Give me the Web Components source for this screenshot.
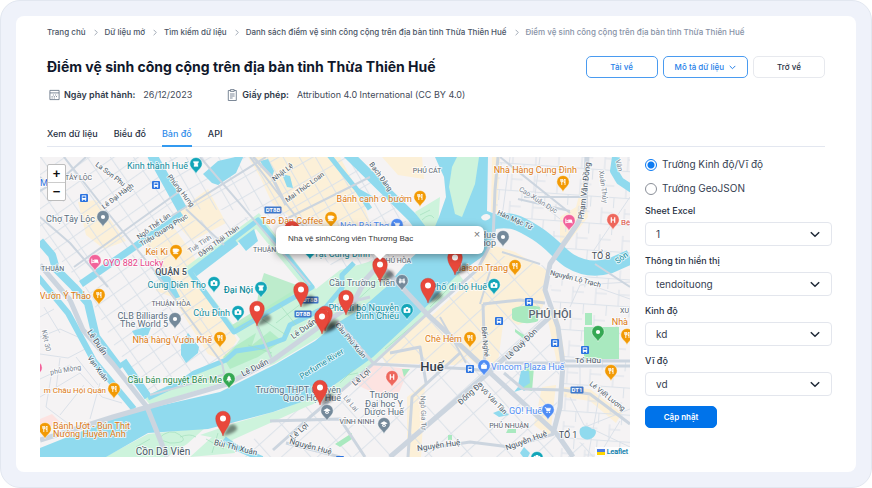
<!DOCTYPE html>
<html lang="vi">
<head>
<meta charset="utf-8">
<meta name="viewport" content="width=device-width, initial-scale=1">
<title>Điểm vệ sinh công cộng trên địa bàn tỉnh Thừa Thiên Huế</title>
<style>
    body {
        margin: 0;
        background: #fff;
        color: #27303f;
        font-family: Inter, "Noto Sans", sans-serif;
        font-size: 9px;
    }
</style>
</head>
<body>

<portal-shell>
    <crumb-trail slot="top">
        <a href="#">Trang chủ</a>
        <a href="#">Dữ liệu mở</a>
        <a href="#">Tìm kiếm dữ liệu</a>
        <a href="#">Danh sách điểm vệ sinh công cộng trên địa bàn tỉnh Thừa Thiên Huế</a>
        <span>Điểm vệ sinh công cộng trên địa bàn tỉnh Thừa Thiên Huế</span>
    </crumb-trail>
    <dataset-head slot="top">
        <span slot="title">Điểm vệ sinh công cộng trên địa bàn tỉnh Thừa Thiên Huế</span>
        <action-button slot="actions" kind="outline">Tải về</action-button>
        <action-button slot="actions" kind="outline" caret>Mô tả dữ liệu</action-button>
        <action-button slot="actions">Trở về</action-button>
        <meta-item slot="meta" icon="calendar" label="Ngày phát hành:">26/12/2023</meta-item>
        <meta-item slot="meta" icon="clipboard" label="Giấy phép:">Attribution 4.0 International (CC BY 4.0)</meta-item>
    </dataset-head>
    <tab-bar slot="top">
        <a href="#">Xem dữ liệu</a>
        <a href="#">Biểu đồ</a>
        <a href="#" aria-current="page">Bản đồ</a>
        <a href="#">API</a>
    </tab-bar>
    <geo-map>Nhà vệ sinhCông viên Thương Bạc</geo-map>
    <map-settings></map-settings>
</portal-shell>

<template id="portal-shell">
    <style>
        :host {
            display: block;
            box-sizing: border-box;
            min-height: 100vh;
            padding: 15px;
            border: 1px solid #e2e7f0;
            border-radius: 20px;
            background: #eff2fa;
        }
        .card {
            box-sizing: border-box;
            padding: 8px 24px 15px;
            border-radius: 8px;
            background: #fff;
        }
        .top {
            padding: 0 7px;
        }
        .body {
            display: grid;
            grid-template-columns: minmax(0, 1fr) 187px;
            gap: 15px;
            margin-top: 10px;
        }
    </style>
    <div class="card">
        <header class="top"><slot name="top"></slot></header>
        <main class="body"><slot></slot></main>
    </div>
</template>

<template id="crumb-trail">
    <style>
        :host {
            display: block;
            font-size: 8px;
            font-weight: 500;
            line-height: 16px;
        }
        nav {
            display: flex;
            white-space: nowrap;
        }
        ::slotted(*) {
            color: #4a5465;
            text-decoration: none;
        }
        ::slotted(:not(:last-child)) {
            padding-right: 19px;
            background: var(--chevron) no-repeat right 7px center;
        }
        ::slotted(span) {
            color: #8792a6;
        }
    </style>
    <nav aria-label="Breadcrumb"><slot></slot></nav>
</template>

<template id="dataset-head">
    <style>
        :host {
            display: block;
        }
        .row {
            display: flex;
            justify-content: space-between;
            align-items: center;
            margin-top: 16px;
        }
        h1 {
            margin: 0;
            color: #10182b;
            font-size: 14px;
            font-weight: 700;
            line-height: 22px;
        }
        .actions {
            display: flex;
            gap: 5px;
        }
        .meta {
            display: flex;
            gap: 35px;
            margin-top: 9px;
            padding-left: 2px;
        }
    </style>
    <div class="row">
        <h1><slot name="title"></slot></h1>
        <div class="actions"><slot name="actions"></slot></div>
    </div>
    <div class="meta"><slot name="meta"></slot></div>
</template>

<template id="action-button">
    <style>
        :host {
            display: inline-block;
        }
        button {
            display: flex;
            align-items: center;
            justify-content: center;
            gap: 5px;
            box-sizing: border-box;
            min-width: 72px;
            height: 22px;
            padding: 0 11px;
            border: 1px solid #e7e9ee;
            border-radius: 5px;
            background: #fff;
            color: #27303f;
            font: 500 8px/12px Inter, "Noto Sans", sans-serif;
            white-space: nowrap;
        }
        :host([kind=outline]) button {
            border-color: #4a9bf0;
            color: #2680e8;
        }
        :host([kind=primary]) button {
            border-color: #0073ea;
            background: #0073ea;
            color: #fff;
            font-weight: 600;
        }
        svg {
            display: none;
        }
        :host([caret]) svg {
            display: block;
        }
    </style>
    <button type="button">
        <slot></slot>
        <svg width="7" height="5" viewBox="0 0 7 5" fill="none" stroke="currentColor"><path d="M.7.9 3.5 3.7 6.3.9"/></svg>
    </button>
</template>

<template id="meta-item">
    <style>
        :host {
            display: flex;
            align-items: center;
            color: #3f4958;
            font-size: 9px;
            line-height: 16px;
        }
        b {
            margin: 0 8px 0 4px;
            font-weight: 600;
            color: #303a4a;
        }
        svg {
            fill: none;
            stroke: #5c6b7e;
            stroke-width: .8;
        }
        svg.calendar, svg.clipboard {
            display: none;
        }
        :host([icon=calendar]) svg.calendar,
        :host([icon=clipboard]) svg.clipboard {
            display: block;
        }
    </style>
    <svg class="calendar" width="11" height="12" viewBox="0 0 11 12">
        <path d="M.9 1.4h9.2v9.2H.9zM.9 3.9h9.2"/>
        <path stroke-dasharray="1 1.2" d="M3.9 6h4.6M2.6 7.6h5.6M2.6 9h3.6"/>
    </svg>
    <svg class="clipboard" width="11" height="12" viewBox="0 0 11 12">
        <path d="M3.4 1.5H1.3v10h8v-10H7.2M3.4.6h3.8v1.8H3.4zM3 5h4.6M3 7h4.6M3 9h2.6"/>
    </svg>
    <b></b>
    <span><slot></slot></span>
</template>

<template id="tab-bar">
    <style>
        :host {
            display: block;
            margin-top: 20px;
            border-bottom: 1px solid #e3e7f0;
            font-size: 9px;
            font-weight: 500;
            line-height: 16px;
        }
        nav {
            display: flex;
            gap: 16px;
            margin-bottom: -1px;
        }
        ::slotted(a) {
            padding: 3px 0;
            border-bottom: 2px solid transparent;
            color: #27303f;
            text-decoration: none;
        }
        ::slotted(a[aria-current]) {
            border-color: #339af0;
            color: #2f8cea;
        }
    </style>
    <nav><slot></slot></nav>
</template>

<template id="field-select">
    <style>
        :host {
            display: block;
        }
        label {
            display: block;
            margin-bottom: 5px;
            font-size: 9px;
            font-weight: 500;
            line-height: 12px;
        }
        .box {
            display: grid;
            align-items: center;
        }
        select, svg {
            grid-area: 1 / 1;
        }
        select {
            appearance: none;
            width: 100%;
            height: 24px;
            margin: 0;
            padding: 0 10px;
            border: 1px solid #e3e6ed;
            border-radius: 4px;
            background: #fff;
            color: #364152;
            font: 10px/16px Inter, "Noto Sans", sans-serif;
        }
        svg {
            justify-self: end;
            margin-right: 12px;
            pointer-events: none;
        }
    </style>
    <label for="field"></label>
    <div class="box">
        <select id="field"></select>
        <svg width="10" height="7" viewBox="0 0 10 7" fill="none" stroke="#1f2937" stroke-width="1.5"><path d="M.8 1.2 5 5.2 9.2 1.2"/></svg>
    </div>
</template>

<template id="map-settings">
    <style>
        :host {
            display: block;
        }
        form {
            display: flex;
            flex-direction: column;
            gap: 9px;
        }
        .choice {
            display: flex;
            align-items: center;
            gap: 5px;
            color: #364152;
            font-size: 10px;
            line-height: 15px;
        }
        input {
            appearance: none;
            box-sizing: border-box;
            width: 12px;
            height: 12px;
            margin: 0;
            border: 1px solid #8a8f98;
            border-radius: 50%;
        }
        input:checked {
            border-color: #0d7bf2;
            background: radial-gradient(circle, #0d7bf2 3px, #fff 4px);
        }
        action-button {
            align-self: flex-start;
            margin-top: 1px;
        }
    </style>
    <form>
        <label class="choice"><input type="radio" name="kind" checked>Trường Kinh độ/Vĩ độ</label>
        <label class="choice"><input type="radio" name="kind">Trường GeoJSON</label>
        <field-select label="Sheet Excel" value="1"></field-select>
        <field-select label="Thông tin hiển thị" value="tendoituong"></field-select>
        <field-select label="Kinh độ" value="kd"></field-select>
        <field-select label="Vĩ độ" value="vd"></field-select>
        <action-button kind="primary">Cập nhật</action-button>
    </form>
</template>

<template id="geo-map">
    <style>
        :host {
            display: block;
            position: relative;
            height: 300px;
            overflow: hidden;
            background: #f5f3f4;
        }
        .canvas {
            display: block;
            width: 100%;
            height: 100%;
            font-family: Roboto, "Noto Sans", sans-serif;
        }
        .shop { fill: #fcf0d8; }
        .water { fill: #90daee; }
        .water-line { fill: none; stroke: #90daee; stroke-linejoin: round; }
        .grass { fill: #cdf3dc; }
        .park { fill: #a9e9bf; }
        .clinic { fill: #fde3e1; }
        .lane { fill: none; stroke: #dbe1e9; stroke-width: 1; }
        .road { fill: none; stroke: #ccd5df; stroke-linejoin: round; }
        .path { fill: none; stroke: #a3dfbd; stroke-width: .7; }
        text {
            paint-order: stroke;
            stroke: #fff;
            stroke-width: 2px;
            stroke-linejoin: round;
            stroke-opacity: .7;
        }
        .zoom {
            position: absolute;
            top: 7px;
            left: 7px;
            display: grid;
            border: 1px solid #bdbdbd;
            border-radius: 2px;
            background: #fff;
        }
        .zoom button {
            width: 17px;
            height: 17px;
            padding: 0;
            border: 0;
            background: none;
            color: #111;
            font: bold 13px/17px "Liberation Sans", Arial, sans-serif;
        }
        .zoom button + button {
            height: 18px;
            border-top: 1px solid #ccc;
        }
        /* anchored on the marker of the selected place */
        .popup {
            position: absolute;
            top: 69px;
            left: 236px;
            display: flex;
            box-sizing: border-box;
            width: 208px;
            height: 28px;
            padding: 0 3px 0 12px;
            border-radius: 6px;
            background: #fff;
            box-shadow: 0 2px 8px rgba(0, 0, 0, .4);
            color: #333;
            font: 8px/26px "Liberation Sans", Arial, sans-serif;
        }
        .popup p {
            flex: 1;
            margin: 0;
        }
        .popup::after {
            content: "";
            position: absolute;
            top: 100%;
            left: 50%;
            margin-left: -6px;
            border: 6px solid transparent;
            border-top-color: #fff;
            border-bottom: 0;
        }
        .popup button {
            align-self: flex-start;
            width: 8px;
            padding: 0;
            border: 0;
            background: none;
            color: #757575;
            font: 11px/16px "Liberation Sans", Arial, sans-serif;
        }
        .credit {
            position: absolute;
            right: 0;
            bottom: 0;
            display: flex;
            align-items: center;
            gap: 2px;
            padding: 0 2px;
            background: rgba(255, 255, 255, .8);
            color: #0078a8;
            font: 7px/10px Roboto, sans-serif;
            text-decoration: none;
            -webkit-text-stroke: .2px;
        }
    </style>
    <svg class="canvas" viewBox="0 0 590 300" preserveAspectRatio="xMinYMin slice" role="img" aria-label="Bản đồ Huế">
        <defs>
            <pattern id="grid-nw" width="19" height="14" patternUnits="userSpaceOnUse" patternTransform="rotate(-35)">
                <path class="lane" d="M0 .6H19M.6 0V14"/>
            </pattern>
            <pattern id="grid-c" width="14" height="17" patternUnits="userSpaceOnUse" patternTransform="rotate(-30)">
                <path class="lane" d="M0 .6H14M.6 0V17"/>
            </pattern>
            <pattern id="grid-s" width="30" height="24" patternUnits="userSpaceOnUse" patternTransform="rotate(-42)">
                <path class="lane" d="M0 .6H30M.6 0V24"/>
            </pattern>
            <pattern id="grid-e" width="23" height="27" patternUnits="userSpaceOnUse" patternTransform="rotate(4)">
                <path class="lane" d="M0 .6H23M.6 0V11M12 11V27M12 16H23"/>
            </pattern>
            <filter id="soft" x="-50%" y="-50%" width="200%" height="200%"><feGaussianBlur stdDeviation="1.4"/></filter>
        </defs>

        <!-- commercial blocks -->
        <path class="shop" d="M38 45 56 43 86 84 64 92 46 78zM108 74 128 62 152 96 197 183 184 204 168 197 132 140 116 134 122 112 106 88zM208 0H300L322 42 330 66 300 75 250 60 232 46 220 20zM130 60 168 32 186 66 152 84zM452 88 475 95 508 114 504 146 498 160 478 168 464 160 458 205 444 214 425 198 390 160 432 122zM342 0 358 18 384 22 382 0zM452 0h8l-3 55h-6zM340 196 386 158 428 202 416 208 345 206zM367 240l18-14-4 76h-14zM502 230l14-2-6 52-16-12zM524 230l26 2 32 24-6 10-26-22-26-4zM505 150l12 2 8 48-8 6zM520 60l16-10 8-30 4 40-28 36z"/>
        <path class="clinic" d="M313 226 333 208 369 212 358 238 338 238zM0 262l12-5 8 8-20 10z"/>

        <!-- side streets -->
        <path fill="url(#grid-nw)" d="M0 0H112L140 55 40 125 0 80z"/>
        <path fill="url(#grid-nw)" d="M45 130 142 64 212 60 145 112 198 185 186 204 110 240 75 190z"/>
        <path fill="url(#grid-c)" d="M127 0H312L375 75 340 110 296 112 222 54 146 52z"/>
        <path fill="url(#grid-s)" d="M447 95 510 110 503 160 520 205 515 278 590 300H190L240 262 333 208z"/>
        <path fill="url(#grid-e)" d="M460 0H590V100L555 107 525 95 490 66 455 55z"/>
        <path fill="url(#grid-e)" d="M508 112 540 120 590 112V300H515L523 210z"/>
        <path class="lane" d="M0 197 28 201 49 190M0 240 40 216 62 240 82 246M12 214 6 250 30 268M36 200 58 228M0 222 30 208M0 180 20 172 38 180M4 150 20 176M0 160 14 152M20 201 16 232M44 228 20 258M60 226 50 262"/>
        <path class="lane" d="M500 0 494 46M534 70 516 92M552 96 590 40M556 130 590 142M530 240 544 268 590 290M540 210v24M560 234 548 300M580 264 558 300M470 0 462 60M480 30 520 62M540 272 590 252M530 150 540 128 590 125"/>

        <!-- parks and river banks -->
        <path class="grass" d="M143 112 219 56 276 132 300 113 332 104 352 118 340 140 308 163 234 207 187 224 110 248 104 240 150 218 185 204 200 182zM375 55 400 40 398 70 388 78zM290 232 380 152 418 116 424 124 330 208 296 238 268 249 190 284 160 278 195 266 240 253zM65 300 108 277 165 271 147 287 127 300zM172 280 190 272 195 296 150 300z"/>
        <path fill="#f5f3f4" d="M155 118 216 72 262 128 195 170z"/>
        <path class="park" fill-opacity=".75" d="M219 132 224 116 262 130 240 148 222 162 196 174 192 168 216 153zM183 200 194 190 216 176 212 188 230 174 242 184 218 200 190 212z"/>

        <!-- water -->
        <path class="water" d="M0 291 75 261 97 254 180 235 236 207 275 184 294 168 322 151 345 131 368 104 388 86 399 60 406 40 404 20 395 0H448L447 54 458 58 454 84 446 97 418 117 378 158 333 200 290 231 267 243 233 255 168 272 108 276 66 300H0z"/>
        <path class="water-line" stroke-width="15" d="M448 66C470 60 480 66 496 76S520 98 530 104 552 114 570 109L590 100"/>
        <path class="water-line" stroke-width="10" d="M112-2 142 52M307-4 372 60 392 86"/>
        <path class="water-line" stroke-width="7" d="M142 57 41 127"/>
        <path class="water-line" stroke-width="8" d="M0 84 12 98 16 112 34 130 48 146 56 180 80 212M83 204 108 240"/>
        <path class="water-line" stroke-width="6" d="M-2 120 28 156 54 204 94 252M184 282 195 290 222 302"/>
        <path class="water-line" stroke-width="5" d="M150 115 218 63 272 130 194 175zM108 241 140 226 154 216 186 203 196 194 222 190 244 182 250 168 286 150 302 131 302 118 314 106M289-2 300 12 318 34 332 42M318 34 330 52"/>
        <path class="water-line" stroke-width="8" d="M154 116 196 84M576 0 574 14 580 24 592 32"/>
        <path class="water" d="M163 17 178 4 204-2 196 16 178 28 172 26zM198 84 214 72 218 84 206 94zM141 188 148 176 159 190 158 196 146 206 141 198zM118 114 130 120 140 140 134 142 114 116zM220 4 228 2 234 14 232 20 226 14zM242 17l8 2 3 12-6-1zM92 174 112 168 108 178 96 181zM481 214 490 212 492 228 484 234 478 228zM453 256l10-4 6 6-10 2zM478 230l6 2-10 3zM540 272c4-5 10-2 12 0 6-1 5 8-2 10-7 2-12-4-10-10zM484 290l6 6-4 8-6-8z"/>
        <path class="grass" d="M417 0H439L435 27 422 60 415 57 409 30 412 10z"/>
        <path fill="#f5f3f4" d="M441 60C445 54 452 58 450 61S442 65 441 60z"/>
        <path class="park" d="M472 152c6-4 22-4 28-2l-2 14c-8 4-24 2-26-3zM475 172l12 8-3 2-9-7zM545 156h7v12h-7zM544 170h35v32h-35zM484 206l10 4-2 24-8-2zM468 272h8v4h-10zM295 287 312 276 312 282 300 290zM362 212h8l-6 8zM408 278h4v5h-4z"/>
        <path class="water" d="M483 213 489 214 490 226 484 230 480 226z"/>
        <path class="path" d="M200 172 232 152M218 168 232 200M240 148 256 168M222 162 246 178M236 166 262 146M208 188 232 196M118 282q12-12 22-4t-10 8zM140 280q10-4 16 0M300 226 314 212M308 218 318 216M380 58l10-5M382 63q8-8 12-2M345 192 378 164M390 150 414 126M312 148 340 122M96 290l14-8M166 282l18 10M178 276l-6 20"/>

        <!-- main streets -->
        <path class="road" stroke-width="2" d="M0 34 24 20 46 0M0 60 30 86 68 130M24 0 68 56 116 116 182 206M34 110 98 64 140 34M146 52 184 88M182 206 186 226M160 0 270 128M210 0 254 57 284 96M130 60 226 0M246 62 330 20M217 169 231 201M110 238 190 216M0 20 24 44M460 0 530 56M478 42 530 54M462 95 500 107M400 160 426 206M484 40 544 40M555 107 590 130M440 147 452 108"/>
        <path class="road" stroke-width="3" d="M334 207 430 212 448 214M443 147 480 143 505 146M443 147 445 212M483 232 523 233 550 237 590 267M483 232 464 216M233 293 270 260 333 207 387 157 437 113 453 83 455 33 458 0M386 226 380 190 350 196M368 300 372 240 420 196M290 150 330 140M213 0 232 20 246 48M246 286 300 300M377 293 430 285 470 290 514 277M230 264 300 262 325 300"/>
        <path class="road" stroke-width="3" d="M297 164 334 207"/>
        <path class="road" stroke-width="5" d="M0 108 30 143 43 173 73 207 107 250 127 300M0 283 73 260 143 240 187 227 233 203 283 167 312 148 326 122 340 107M340 107 387 157 433 200 517 277 533 300M350 300 447 217 510 160M547-2 545 50 538 66 510 107 505 133 518 170 523 207 520 250 513 277"/>
        <path class="road" stroke-width="3" d="M523 204H590M523 209H590M520 206H465"/>

        <g id="badges"></g>
        <g id="labels"></g>
        <g id="places"></g>
        <g id="markers"></g>
    </svg>
    <div class="zoom">
        <button type="button" aria-label="Phóng to">+</button>
        <button type="button" aria-label="Thu nhỏ">−</button>
    </div>
    <div class="popup">
        <p><slot></slot></p>
        <button type="button" aria-label="Đóng">×</button>
    </div>
    <a class="credit" href="#"><svg width="8" height="6" viewBox="0 0 8 6"><path fill="#4c7be1" d="M0 0h8v3H0z"/><path fill="#ffd500" d="M0 3h8v3H0z"/></svg>Leaflet</a>
</template>

<script>
    (function (window, document) {

        var CHEVRON = 'url("data:image/svg+xml,%3Csvg xmlns=\'http://www.w3.org/2000/svg\' width=\'4\' height=\'7\' fill=\'none\' stroke=\'%238b95a5\' stroke-width=\'.8\'%3E%3Cpath d=\'M.6.8 3.3 3.5.6 6.2\'/%3E%3C/svg%3E")';

        var ORANGE = '#f29a05', TEAL = '#12a5b8', GREY = '#74899a', PINK = '#f2629a',
            BLUE = '#4f8df5', RED = '#ee675c', GREEN = '#34a853';

        // Glyphs are drawn around the centre of the pin head
        var GLYPHS = {
            food: '<path d="M-2.2-3v2q0 1.2 1 1.3V3M-.3-3v2q0 1.2-.9 1.3M-1.2-3v3M2 3V-3Q.6-2 1 .4H2"/>',
            cup: '<path fill="#fff" d="M-2.8-2h4.4v2.2q0 1.2-1.2 1.2h-2q-1.2 0-1.2-1.2z"/><path d="M1.6-1.5h1.2v1.6H1.6M-2.8 2.6h5"/>',
            dot: '<circle r="2.1" fill="#fff" stroke="none"/>',
            bed: '<path d="M-3.2-2.4v4.8M-3.2 1.4h6.4v1"/><path fill="#fff" stroke="none" d="M-.8-1.5h2.6q1.4 0 1.4 1.4V1H-.8z"/><circle cx="-1.8" cy="-.2" r=".8" fill="#fff" stroke="none"/>',
            camera: '<path fill="#fff" d="M-3-1.6h1.4l.6-.9h2l.6.9H3v4h-6z"/><circle r="1.1" cy=".4" fill="#12a5b8" stroke="none"/>',
            castle: '<path fill="#fff" d="M-2.4-2.8h1v.8h.8v-.8h1.2v.8h.8v-.8h1v1.8l-.8.6.5 2.8h-4.2l.5-2.8-.8-.6z" stroke-width=".3"/>',
            tree: '<path fill="#fff" stroke="none" d="M0-3.6 2-.8H1.3L2.8 1.6H.5V3.2h-1V1.6h-2.3L-1.3-.8H-2z"/>',
            school: '<path fill="#fff" stroke="none" d="M0-2.8 3.6-.8 0 1.2-3.6-.8zM-2 .8 0 1.9 2 .8v1.3L0 3.1-2 2.1z"/>',
            cart: '<path fill="#fff" d="M-3.2-2.4h1l1 3.4h3l.9-2.8h-4.4z" stroke-width=".5"/><circle cx="-1" cy="2.4" r=".7" fill="#fff" stroke="none"/><circle cx="1.5" cy="2.4" r=".7" fill="#fff" stroke="none"/>',
            bag: '<path fill="#fff" d="M-2.4-1h4.8v3.4h-4.8z"/><path d="M-1.2-1q0-2 1.2-2t1.2 2"/>',
            hospital: '<path d="M-1.7-2.7v5.4M1.7-2.7v5.4M-1.7 0h3.4" stroke-width="1.2"/>',
            bridge: '<path d="M-2-2.6v5.2M2-2.6v5.2M-3.2.8h6.4M-2-1h4" stroke-width="1.2"/>'
        };

        // tip x, tip y, colour, glyph
        var PLACES = [
            [156, 17, TEAL, 'castle'], [63, 70, GREY, 'dot'], [55, 114, PINK, 'bed'],
            [136, 104, ORANGE, 'cup'], [59, 148, ORANGE, 'food'], [174, 136, TEAL, 'camera'],
            [221, 141, TEAL, 'castle'], [198, 165, TEAL, 'camera'], [135, 172, GREY, 'dot'],
            [180, 191, ORANGE, 'food'], [189, 232, GREEN, 'tree'], [74, 242, ORANGE, 'food'],
            [5, 282, ORANGE, 'food'], [-4, 221, PINK, 'bed'], [287, 264, GREY, 'school'],
            [291, 71, ORANGE, 'cup'], [380, 50, ORANGE, 'food'], [357, 78, BLUE, 'cart'],
            [463, 90, GREY, 'dot'], [523, 35, ORANGE, 'food'], [529, 74, PINK, 'bed'],
            [573, 73, RED, 'hospital'], [475, 119, ORANGE, 'food'], [362, 134, GREY, 'bridge'],
            [454, 138, TEAL, 'camera'], [367, 163, TEAL, 'camera'], [430, 191, ORANGE, 'food'],
            [444, 219, BLUE, 'bag'], [352, 230, RED, 'hospital'], [344, 277, GREY, 'school'],
            [508, 263, BLUE, 'cart'], [558, 185, GREEN, 'dot'], [587, 188, ORANGE, 'food'],
            [571, 224, ORANGE, 'food'], [497, 311, TEAL, 'camera'], [270, 103, TEAL, 'dot']
        ];

        var MARKERS = [
            [252, 89], [340, 125], [415, 118], [388, 146], [261, 150], [306, 158],
            [217, 169], [285, 174], [282, 177], [280, 248], [183, 279]
        ];

        // bus stops and road shields
        var STOPS = [[44, 41], [116, 28], [489, 145], [459, 164], [515, 186], [430, 212], [545, 193], [300, 303]];
        var SHIELDS = [[233, 53, 'DT8B'], [270, 143, 'DT8B'], [263, 157, 'DT8B'], [537, 233, 'DT1']];

        // x, y, text, size, colour, anchor, angle, weight
        var STREET = '#4a5765', AREA = '#5a6470', O = '#dd7a14', T = '#128b9c', G = '#5b6f80';
        var LABELS = [
            [148, 12, 'Kinh thành Huế', 9, T, 'end'],
            [55, 65, 'Chợ Tây Lộc', 9, G, 'end'],
            [63, 109, 'OYO 882 Lucky', 9, '#e8458b', 'start'],
            [128, 98, 'Kei Ki', 9, O, 'end'],
            [51, 142, 'Vườn Ý Thảo', 9, O, 'end'],
            [166, 131, 'Cung Diên Thọ', 9, T, 'end'],
            [213, 136, 'Đại Nội', 9, T, 'end', 0, 500],
            [190, 159, 'Cửu Đỉnh', 9, T, 'end'],
            [128, 162, 'CLB Billiards', 9, G, 'end'],
            [128, 170, 'The World 5', 9, G, 'end'],
            [172, 186, 'Nhà hàng Vườn Khế', 9, O, 'end'],
            [182, 226, 'Cầu bán nguyệt Bến Me', 9, '#2c8a4b', 'end'],
            [66, 236, 'm Châu Hội Quán', 8, O, 'end'],
            [13, 272, 'Bánh Ướt - Bún Thịt', 9, O, 'start'],
            [13, 280, 'Nướng Huyền Anh', 9, O, 'start'],
            [283, 67, 'Tao Đàn Coffee', 9, O, 'end'],
            [372, 45, 'Bánh canh o bướm', 9, O, 'end'],
            [349, 72, 'Nón Bài Thơ', 9, BLUE, 'end'],
            [330, 100, 'Tạt Cung Đình', 9, T, 'end'],
            [456, 81, 'Hue', 9, G, 'end'],
            [456, 89, 'Shop', 9, G, 'end'],
            [537, 16, 'Nhà Hàng Cung Đình', 9, O, 'end'],
            [581, 68, 'Bệ', 8, '#dc4c43', 'start'],
            [468, 114, 'Maison Trang', 9, O, 'end'],
            [355, 129, 'Cầu Trường Tiền', 9, G, 'end'],
            [447, 133, 'Phố đi bộ Huế', 9, T, 'end'],
            [359, 154, 'Phố đi bộ Nguyễn', 9, T, 'end'],
            [359, 162, 'Đình Chiểu', 9, T, 'end'],
            [422, 185, 'Chè Hẻm', 9, O, 'end'],
            [451, 213, 'Vincom Plaza Huế', 9, BLUE, 'start'],
            [502, 257, 'GO! Huế', 9, BLUE, 'end'],
            [588, 168, 'Nhà', 9, O, 'end'],
            [301, 236, 'Trường THPT Chuyên', 9, G, 'end'],
            [301, 244, 'Quốc Học Huế', 9, G, 'end'],
            [344, 241, 'Trường', 9, G, 'middle'],
            [344, 250, 'Đại học Y', 9, G, 'middle'],
            [344, 258, 'Dược Huế', 9, G, 'middle'],
            [0, 29, 'M', 9, '#2b73e0', 'start'],
            [392, 214, 'Huế', 13, '#333b44', 'middle', 0, 500],
            [510, 161, 'PHÚ HỘI', 11, AREA, 'middle', 0, 500],
            [131, 118, 'QUẬN 5', 9, '#454f5a', 'middle', 0, 500],
            [561, 102, 'TỔ 8', 9, '#454f5a', 'middle'],
            [528, 281, 'TỔ 1', 9, '#454f5a', 'middle'],
            [131, 149, 'THUẬN HÒA', 7, AREA, 'middle'],
            [1, 114, 'THUẬN', 7, AREA, 'start'],
            [25, 23, 'TÂY LỘC', 7, AREA, 'start'],
            [213, 95, 'THUẬN', 7, AREA, 'start'],
            [387, 16, 'PHÚ CÁT', 7, AREA, 'middle'],
            [371, 106, 'PHÚ HÒA', 7, AREA, 'end'],
            [317, 267, 'VĨNH NINH', 7, AREA, 'middle'],
            [469, 271, 'PHÚ NHUẬN', 7, AREA, 'middle'],
            [589, 156, 'XU', 7, AREA, 'end'],
            [73, 22, 'La Son Phu Tử', 7, STREET, 'middle', 37],
            [79, 41, 'Lê Đại Hành', 7, STREET, 'middle', -37],
            [139, 35, 'Phùng Hưng', 7, STREET, 'middle', 52],
            [115, 71, 'Ngô Thế Lân', 7, STREET, 'middle', -36],
            [125, 75, 'Triệu Quang Phục', 7, STREET, 'middle', -32],
            [161, 89, 'Tuệ Tĩnh', 7, '#7a8591', 'middle', -34],
            [180, 86, 'Đặng Thái Thân', 7, STREET, 'middle', -36],
            [244, 17, 'Nhật Lệ', 7, STREET, 'middle', -38],
            [266, 32, 'Mai Thúc Loan', 7, STREET, 'middle', -36],
            [339, 21, 'Bạch Đằng', 7, STREET, 'middle', 54],
            [497, 45, 'Cao Xuân Dục', 7, '#7a8591', 'middle', 32],
            [474, 65, 'Hàn Mặc Tử', 7, STREET, 'middle', 24],
            [547, 34, 'Phạm Văn Đồng', 8, STREET, 'middle', -83],
            [561, 30, 'Xuân Thủy', 7, '#7a8591', 'middle', 83],
            [577, 9, 'Vân', 7, '#7a8591', 'middle', 75],
            [583, 103, 'Sôn', 8, T, 'middle', -35],
            [535, 124, 'Nguyễn Lộ Trạch', 7, STREET, 'middle', 14],
            [55, 187, 'Lê Duẩn', 8, STREET, 'middle', 56],
            [56, 213, 'Vạn Xuân', 7, STREET, 'middle', 54],
            [4, 184, 'Kiệt 30', 7, '#7a8591', 'middle', 78],
            [26, 215, 'phủ Mộng', 7, '#7a8591', 'middle', -10],
            [216, 213, 'Lê Duẩn', 8, STREET, 'middle', -27],
            [265, 174, 'Lê Duẩn', 8, STREET, 'middle', -35],
            [283, 209, 'Perfume River', 8, T, 'middle', -32],
            [309, 185, 'Cầu Phú Xuân', 7, STREET, 'middle', 50],
            [323, 222, 'Lê Lợi', 8, STREET, 'middle', -42],
            [261, 276, 'Lê Lợi', 8, STREET, 'middle', -42],
            [309, 248, 'Lê Lai', 7, '#7a8591', 'middle', 50],
            [432, 238, 'Đống Đa', 8, STREET, 'middle', -42],
            [483, 189, 'Lê Quý Đôn', 8, STREET, 'middle', -44],
            [443, 185, 'Bến Nghé', 7, STREET, 'middle', 84],
            [548, 206, 'Tố Hữu', 8, STREET, 'middle'],
            [566, 241, 'Lê Viết Lượng', 7, STREET, 'middle', 38],
            [452, 245, 'Võ Văn Tần', 7, STREET, 'middle', 46],
            [381, 256, 'Ngô Gia Tự', 7, '#7a8591', 'middle', 88],
            [399, 291, 'Nguyễn Huệ', 8, STREET, 'middle', -8],
            [487, 286, 'Nguyễn Huệ', 8, STREET, 'middle', -20],
            [270, 292, 'Nguyễn Huệ', 8, STREET, 'middle', 15],
            [195, 293, 'Bùi Thị Xuân', 8, STREET, 'middle', 14],
            [123, 298, 'Cồn Dã Viên', 10, STREET, 'middle']
        ];

        class BaseElement extends HTMLElement {
            constructor() {
                super();
                this.shadowDom = this.attachShadow({mode: 'open'});
                var template = document.getElementById(this.localName);
                this.shadowDom.appendChild(document.importNode(template.content, true));
            }

            $(selector) {
                return this.shadowDom.querySelector(selector);
            }
        }

        class PortalShell extends BaseElement {}

        class CrumbTrail extends BaseElement {
            connectedCallback() {
                this.style.setProperty('--chevron', CHEVRON);
            }
        }

        class DatasetHead extends BaseElement {}

        class ActionButton extends BaseElement {}

        class TabBar extends BaseElement {}

        class MapSettings extends BaseElement {}

        class MetaItem extends BaseElement {
            connectedCallback() {
                this.$('b').textContent = this.getAttribute('label');
            }
        }

        class FieldSelect extends BaseElement {
            connectedCallback() {
                var value = this.getAttribute('value');
                this.$('label').textContent = this.getAttribute('label');
                this.$('select').replaceChildren(new Option(value, value));
            }
        }

        class GeoMap extends BaseElement {
            connectedCallback() {
                this.$('#badges').innerHTML = STOPS.map(this.drawStop).join('') + SHIELDS.map(this.drawShield).join('');
                this.$('#labels').innerHTML = LABELS.map(this.drawLabel).join('');
                this.$('#places').innerHTML = PLACES.map(this.drawPlace).join('');
                this.$('#markers').innerHTML = MARKERS.map(this.drawMarker).join('');
            }

            drawStop([x, y]) {
                return `<g transform="translate(${x} ${y})"><rect x="-4" y="-4" width="8" height="8" rx="1" fill="#2b73e0"/>
                    <path fill="#fff" d="M-2.2-2.6h4.4v4.4h-4.4z"/><path fill="#2b73e0" d="M-1.5-1.6h3v1.6h-3z"/>
                    <path stroke="#fff" d="M-1.6 1.6v1.2M1.6 1.6v1.2"/></g>`;
            }

            drawShield([x, y, name]) {
                var w = name.length * 4 + 1;
                return `<rect x="${x - w / 2}" y="${y - 3.5}" width="${w}" height="7" rx="1" fill="#3f78c9"/>
                    <text x="${x}" y="${y + 2}" font-size="6" font-weight="700" fill="#fff" text-anchor="middle" style="stroke:none">${name}</text>`;
            }

            drawLabel([x, y, text, size, color, anchor, angle = 0, weight = 400]) {
                return `<text transform="translate(${x} ${y}) rotate(${angle})" font-size="${size}" font-weight="${weight}" fill="${color}" text-anchor="${anchor}">${text}</text>`;
            }

            drawPlace([x, y, color, glyph]) {
                return `<g transform="translate(${x} ${y})"><path fill="${color}" stroke="#fff" stroke-width=".5" d="M0 0C-1-4-6.2-5.5-6.2-10.3A6.2 6.2 0 1 1 6.2-10.3C6.2-5.5 1-4 0 0z"/>
                    <g transform="translate(0 -10)" fill="none" stroke="#fff" stroke-width=".9">${GLYPHS[glyph]}</g></g>`;
            }

            drawMarker([x, y]) {
                return `<g transform="translate(${x} ${y})"><path filter="url(#soft)" fill="#000" fill-opacity=".45" d="M0 0 5-9Q9-14 13-10T7-2z"/>
                    <path fill="#e8483b" stroke="#c93a30" stroke-width=".4" d="M0 0C-1.5-6-7.3-10-7.3-17.5A7.3 7.3 0 1 1 7.3-17.5C7.3-10 1.5-6 0 0z"/>
                    <circle cy="-17.5" r="3" fill="#fff"/></g>`;
            }
        }

        window.customElements.define('portal-shell', PortalShell);
        window.customElements.define('crumb-trail', CrumbTrail);
        window.customElements.define('dataset-head', DatasetHead);
        window.customElements.define('action-button', ActionButton);
        window.customElements.define('meta-item', MetaItem);
        window.customElements.define('tab-bar', TabBar);
        window.customElements.define('field-select', FieldSelect);
        window.customElements.define('map-settings', MapSettings);
        window.customElements.define('geo-map', GeoMap);
    })(window, document);
</script>
</body>
</html>
